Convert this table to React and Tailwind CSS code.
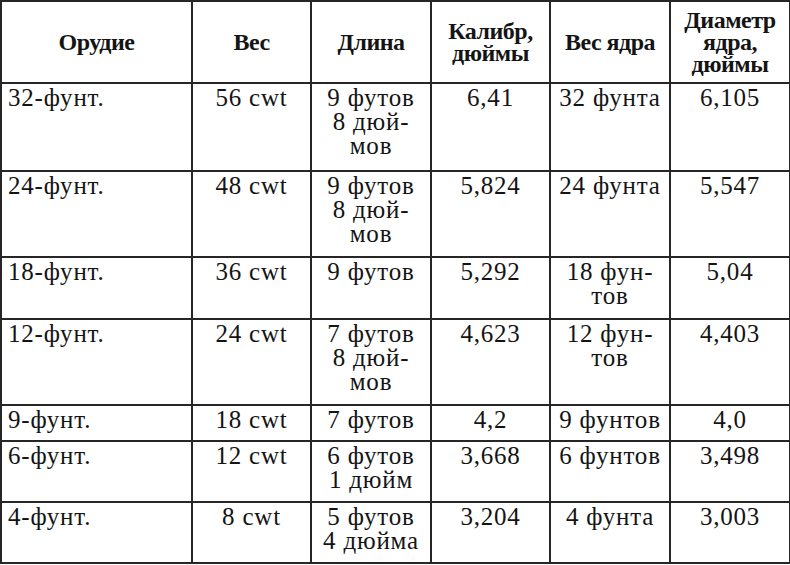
import React from "react";

const rows = [
  { h: "h-[88px]", c: ["32-фунт.", "56 cwt", ["9 футов", "8 дюй-", "мов"], "6,41", "32 фунта", "6,105"] },
  { h: "h-[86px]", c: ["24-фунт.", "48 cwt", ["9 футов", "8 дюй-", "мов"], "5,824", "24 фунта", "5,547"] },
  { h: "h-[62px]", c: ["18-фунт.", "36 cwt", "9 футов", "5,292", ["18 фун-", "тов"], "5,04"] },
  { h: "h-[86px]", c: ["12-фунт.", "24 cwt", ["7 футов", "8 дюй-", "мов"], "4,623", ["12 фун-", "тов"], "4,403"] },
  { h: "h-[36px]", c: ["9-фунт.", "18 cwt", "7 футов", "4,2", "9 фунтов", "4,0"] },
  { h: "h-[61px]", c: ["6-фунт.", "12 cwt", ["6 футов", "1 дюйм"], "3,668", "6 фунтов", "3,498"] },
  { h: "h-[61px]", c: ["4-фунт.", "8 cwt", ["5 футов", "4 дюйма"], "3,204", "4 фунта", "3,003"] },
];

const headers = [
  ["Орудие"],
  ["Вес"],
  ["Длина"],
  ["Калибр,", "дюймы"],
  ["Вес ядра"],
  ["Диаметр", "ядра,", "дюймы"],
];

function Lines({ v }) {
  const arr = Array.isArray(v) ? v : [v];
  return arr.map((t, i) => (
    <React.Fragment key={i}>
      {i > 0 && <br />}
      {t}
    </React.Fragment>
  ));
}

export default function App() {
  return (
    <div className="w-[790px] h-[565px] bg-white overflow-hidden font-serif">
      <table className="table-fixed border-collapse w-[789px] text-[#141414]">
        <colgroup>
          <col className="w-[191px]" />
          <col className="w-[119px]" />
          <col className="w-[120px]" />
          <col className="w-[119px]" />
          <col className="w-[120px]" />
          <col className="w-[120px]" />
        </colgroup>
        <thead>
          <tr className="h-[82px]">
            {headers.map((h, i) => (
              <th
                key={i}
                className="font-['Liberation_Serif',serif] border-2 border-[#262626] align-middle text-center font-bold text-[24px] leading-[22px] tracking-[-0.5px] p-0 pb-[1px]"
              >
                <Lines v={h} />
              </th>
            ))}
          </tr>
        </thead>
        <tbody>
          {rows.map((r, ri) => (
            <tr key={ri} className={r.h}>
              {r.c.map((v, ci) => (
                <td
                  key={ci}
                  className={
                    "font-['Liberation_Serif',serif] border-2 border-[#262626] align-top text-[25px] leading-[24px] tracking-[0.8px] pt-[2px] pb-0 " +
                    (ci === 0 ? "text-left pl-[6px]" : "text-center px-0")
                  }
                >
                  <Lines v={v} />
                </td>
              ))}
            </tr>
          ))}
        </tbody>
      </table>
    </div>
  );
}
